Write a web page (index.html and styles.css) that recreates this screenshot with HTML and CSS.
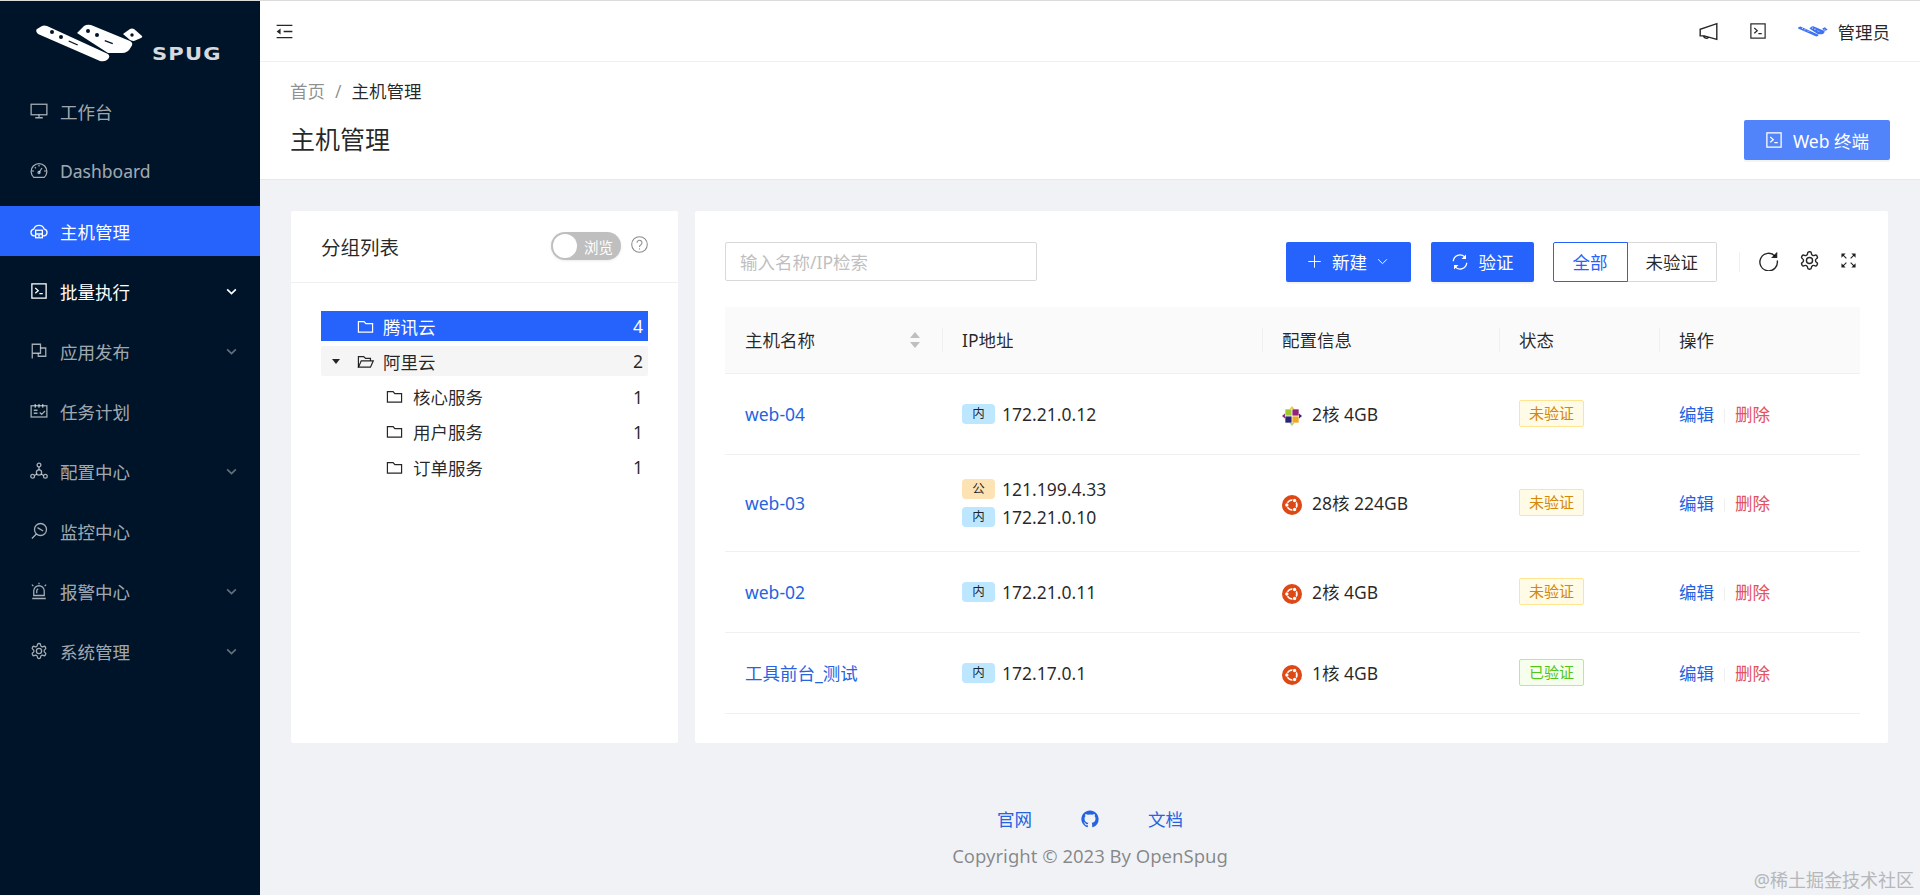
FILE: index.html
```html
<!DOCTYPE html>
<html lang="zh-CN">
<head>
    <meta charset="UTF-8">
    <meta name="viewport" content="width=device-width, initial-scale=1.0">
    <title>主机管理</title>
    <link rel="stylesheet" href="styles.css">
</head>
<body>
    <!-- Icon sprite -->
    <svg class="sprite" xmlns="http://www.w3.org/2000/svg">
        <symbol id="i-logo" viewBox="36 24 108 39">
            <path class="logo-body" d="M42 26 Q44 25 47 26 L108 54 Q111 57 107 60 Q104 62 100 61 L38 34 Q35 31 37 29z"/>
            <path class="logo-body" d="M77 33 L84 26 Q87 24 91 25 L130 41 Q134 43 131 47 Q128 53 122 53 L108 53z"/>
            <path class="logo-body" d="M123 34 L130 29 Q132 28 134 29 L142 36 Q143 37 141 38 L134 41 Q132 41 130 40z"/>
            <g class="logo-mark">
                <circle cx="52" cy="32" r="2"/><circle cx="61" cy="37" r="2"/>
                <path d="M69 40.5 L78 44.5 L77.4 45.6 L68.4 41.6z"/>
                <circle cx="88" cy="31" r="2"/><circle cx="97" cy="35" r="2"/>
                <path d="M105 40 L113 43 L112.5 44.2 L104.5 41.2z"/>
                <circle cx="132" cy="35" r="1.7"/>
            </g>
        </symbol>
        <symbol id="i-desktop" viewBox="0 0 24 24"><rect x="1.5" y="3" width="21" height="14"/><path d="M12 17v4M7 21h10"/></symbol>
        <symbol id="i-dashboard" viewBox="0 0 24 24"><path d="M5 20.5a10.5 10.5 0 1 1 14 0z"/><path d="M12 14l4-6M12 4v2M5 12H3M21 12h-2M6.5 7l1.3 1.3"/><circle cx="12" cy="14" r="1.4"/></symbol>
        <symbol id="i-cloud" viewBox="0 0 24 24"><path d="M7 18.5H5.5a4.5 4.5 0 0 1-.6-8.9 7.5 7.5 0 0 1 14.2 0 4.5 4.5 0 0 1-.6 8.9H17"/><rect x="7.5" y="11" width="9" height="10"/><path d="M7.5 16h9M10.5 18.5h3"/></symbol>
        <symbol id="i-code" viewBox="0 0 24 24"><rect x="2.5" y="2.5" width="19" height="19"/><path d="M7 8l4 3.5L7 15M12.5 15.5h4.5"/></symbol>
        <symbol id="i-deploy" viewBox="0 0 24 24"><path d="M3 22V3h11v12H3"/><path d="M14 8h7v11H11v-4"/></symbol>
        <symbol id="i-schedule" viewBox="0 0 24 24"><rect x="1.5" y="5" width="21" height="15"/><path d="M7 2.5v5M12 2.5v5M17 2.5v5M5 11h5M5 15h5M13 14l2.5 2.5L20 12"/></symbol>
        <symbol id="i-unit" viewBox="0 0 24 24"><circle cx="12" cy="4" r="2.5"/><circle cx="3.5" cy="19" r="2.5"/><circle cx="20.5" cy="19" r="2.5"/><circle cx="12" cy="14" r="3.5"/><path d="M12 6.5v4M6 18l3-2M18 18l-3-2"/></symbol>
        <symbol id="i-radar" viewBox="0 0 24 24"><circle cx="14" cy="10" r="8"/><path d="M8.5 16L2.5 22M10 7.5l7.5 4.5"/></symbol>
        <symbol id="i-alert" viewBox="0 0 24 24"><path d="M5 18v-6a7 7 0 0 1 14 0v6z"/><path d="M3 22h18M12 1v2M2.5 3.5l2 2M21.5 3.5l-2 2M9 15v-3a3 3 0 0 1 2-2.800"/></symbol>
        <symbol id="i-gear" viewBox="0 0 24 24"><path d="M12.220 2h-.44a2 2 0 0 0-2 2v.18a2 2 0 0 1-1 1.730l-.43.25a2 2 0 0 1-2 0l-.15-.08a2 2 0 0 0-2.730.73l-.22.38a2 2 0 0 0 .73 2.730l.15.1a2 2 0 0 1 1 1.720v.51a2 2 0 0 1-1 1.740l-.15.09a2 2 0 0 0-.73 2.730l.22.38a2 2 0 0 0 2.730.73l.15-.08a2 2 0 0 1 2 0l.43.25a2 2 0 0 1 1 1.730V20a2 2 0 0 0 2 2h.44a2 2 0 0 0 2-2v-.18a2 2 0 0 1 1-1.730l.43-.25a2 2 0 0 1 2 0l.15.08a2 2 0 0 0 2.730-.73l.22-.39a2 2 0 0 0-.73-2.730l-.15-.08a2 2 0 0 1-1-1.740v-.5a2 2 0 0 1 1-1.740l.15-.09a2 2 0 0 0 .73-2.730l-.22-.38a2 2 0 0 0-2.730-.73l-.15.08a2 2 0 0 1-2 0l-.43-.25a2 2 0 0 1-1-1.730V4a2 2 0 0 0-2-2z"/><circle cx="12" cy="12" r="3.500"/></symbol>
        <symbol id="i-chevron" viewBox="0 0 24 24"><path d="M4 8l8 8 8-8"/></symbol>
        <symbol id="i-menu" viewBox="0 0 24 24"><path d="M3 5h18M11 12h10M3 19h18"/><path class="solid" d="M7.500 8.500v7L3 12z"/></symbol>
        <symbol id="i-sound" viewBox="0 0 24 24"><path d="M21.500 3v18L7 17H2.500V9.500z"/><path d="M6.500 17a3 3 0 0 0 5.500 1.300"/></symbol>
        <symbol id="i-folder" viewBox="0 0 24 24"><path d="M2 5h8l2.500 3H22v12H2z"/></symbol>
        <symbol id="i-folder-open" viewBox="0 0 24 24"><path d="M2 20V5h7.500l2.500 2.500h7V11"/><path d="M2 20l4-9h17l-4 9z"/></symbol>
        <symbol id="i-help" viewBox="0 0 24 24"><circle cx="12" cy="12" r="11"/><path d="M8.500 9.500a3.500 3.500 0 1 1 5.500 2.900c-1.300.8-2 1.500-2 3"/><path d="M12 17.500v1.500"/></symbol>
        <symbol id="i-plus" viewBox="0 0 24 24"><path d="M12 2v20M2 12h20"/></symbol>
        <symbol id="i-sync" viewBox="0 0 24 24"><path d="M3 11a9 9 0 0 1 15.500-5.500M21 13a9 9 0 0 1-15.500 5.500"/><path class="solid" d="M20 2v6h-6zM4 22v-6h6z"/></symbol>
        <symbol id="i-reload" viewBox="0 0 24 24"><path d="M19.500 7A10 10 0 1 0 22 12"/><path class="solid" d="M22 2v7h-7z"/></symbol>
        <symbol id="i-full" viewBox="0 0 24 24"><path d="M4 4l5 5M20 4l-5 5M4 20l5-5M20 20l-5-5"/><path class="solid" d="M2 2h6L2 8zM22 2v6l-6-6zM2 22v-6l6 6zM22 22h-6l6-6z"/></symbol>
        <symbol id="i-ubuntu" viewBox="0 0 24 24">
            <circle class="ub-bg" cx="12" cy="12" r="12"/>
            <circle class="ub-ring" cx="12" cy="12" r="5.800"/>
            <circle class="ub-bg" cx="6.500" cy="12" r="2.800"/><circle class="ub-bg" cx="14.800" cy="7.200" r="2.800"/><circle class="ub-bg" cx="14.800" cy="16.800" r="2.800"/>
            <circle class="ub-dot" cx="5.800" cy="12" r="2"/><circle class="ub-dot" cx="15.100" cy="6.600" r="2"/><circle class="ub-dot" cx="15.100" cy="17.400" r="2"/>
        </symbol>
        <symbol id="i-centos" viewBox="0 0 24 24">
            <rect fill="#9ccd2a" x="4" y="4" width="7.500" height="7.500"/>
            <rect fill="#932279" x="12.500" y="4" width="7.500" height="7.500"/>
            <rect fill="#262577" x="4" y="12.500" width="7.500" height="7.500"/>
            <rect fill="#efa724" x="12.500" y="12.500" width="7.500" height="7.500"/>
            <path fill="#efc65a" d="M12 0l3 3.500H9z"/>
            <path fill="#932279" d="M0 12l3.500-3v6z"/>
            <path fill="#262577" d="M24 12l-3.500-3v6z"/>
            <path fill="#b5d56a" d="M12 24l3-3.500H9z"/>
        </symbol>
        <symbol id="i-github" viewBox="0 0 24 24"><path class="solid" d="M12 .5C5.650.5.5 5.650.5 12c0 5.080 3.290 9.390 7.860 10.910.58.11.79-.25.79-.56v-2.140c-3.200.7-3.870-1.360-3.870-1.360-.52-1.330-1.280-1.690-1.280-1.690-1.040-.71.08-.7.08-.7 1.160.08 1.770 1.190 1.770 1.190 1.030 1.760 2.690 1.250 3.350.96.1-.74.4-1.250.73-1.540-2.550-.29-5.240-1.280-5.240-5.680 0-1.250.45-2.280 1.180-3.080-.12-.29-.51-1.460.11-3.040 0 0 .97-.31 3.170 1.180a11 11 0 0 1 5.770 0c2.200-1.490 3.170-1.180 3.170-1.180.63 1.580.23 2.750.11 3.040.74.8 1.180 1.830 1.180 3.080 0 4.410-2.690 5.380-5.250 5.670.41.36.78 1.060.78 2.140v3.170c0 .31.21.67.8.56A11.500 11.500 0 0 0 23.500 12C23.500 5.650 18.350.5 12 .5z"/></symbol>
    </svg>

    <div class="layout">
        <!-- Sidebar -->
        <aside class="sidebar">
            <div class="logo">
                <svg class="logo-img"><use href="#i-logo"/></svg>
                <span class="logo-text">SPUG</span>
            </div>
            <nav class="menu">
                <a class="menu-item"><svg class="icon"><use href="#i-desktop"/></svg><span>工作台</span></a>
                <a class="menu-item"><svg class="icon"><use href="#i-dashboard"/></svg><span>Dashboard</span></a>
                <a class="menu-item active"><svg class="icon"><use href="#i-cloud"/></svg><span>主机管理</span></a>
                <a class="menu-item bright"><svg class="icon"><use href="#i-code"/></svg><span>批量执行</span><svg class="chevron"><use href="#i-chevron"/></svg></a>
                <a class="menu-item"><svg class="icon"><use href="#i-deploy"/></svg><span>应用发布</span><svg class="chevron"><use href="#i-chevron"/></svg></a>
                <a class="menu-item"><svg class="icon"><use href="#i-schedule"/></svg><span>任务计划</span></a>
                <a class="menu-item"><svg class="icon"><use href="#i-unit"/></svg><span>配置中心</span><svg class="chevron"><use href="#i-chevron"/></svg></a>
                <a class="menu-item"><svg class="icon"><use href="#i-radar"/></svg><span>监控中心</span></a>
                <a class="menu-item"><svg class="icon"><use href="#i-alert"/></svg><span>报警中心</span><svg class="chevron"><use href="#i-chevron"/></svg></a>
                <a class="menu-item"><svg class="icon"><use href="#i-gear"/></svg><span>系统管理</span><svg class="chevron"><use href="#i-chevron"/></svg></a>
            </nav>
        </aside>

        <div class="main">
            <!-- Top bar -->
            <header class="topbar">
                <svg class="icon topbar-toggle"><use href="#i-menu"/></svg>
                <div class="topbar-right">
                    <svg class="icon sound"><use href="#i-sound"/></svg>
                    <svg class="icon"><use href="#i-code"/></svg>
                    <div class="user">
                        <svg class="user-logo"><use href="#i-logo"/></svg>
                        <span>管理员</span>
                    </div>
                </div>
            </header>

            <!-- Page header -->
            <section class="page-header">
                <div class="page-heading">
                    <div class="breadcrumb"><span class="muted">首页</span><span class="muted sep">/</span><span>主机管理</span></div>
                    <h1 class="page-title">主机管理</h1>
                </div>
                <button class="btn btn-light"><svg class="icon"><use href="#i-code"/></svg>Web 终端</button>
            </section>

            <!-- Cards -->
            <section class="content">
                <div class="card group-card">
                    <div class="group-head">
                        <span class="group-title">分组列表</span>
                        <div class="switch"><span class="switch-knob"></span><span>浏览</span></div>
                        <svg class="icon help"><use href="#i-help"/></svg>
                    </div>
                    <ul class="tree">
                        <li class="tree-row selected"><svg class="icon"><use href="#i-folder"/></svg><span class="tree-name">腾讯云</span><span class="tree-count">4</span></li>
                        <li class="tree-row hovered"><span class="caret"></span><svg class="icon"><use href="#i-folder-open"/></svg><span class="tree-name">阿里云</span><span class="tree-count">2</span></li>
                        <li class="tree-row child"><svg class="icon"><use href="#i-folder"/></svg><span class="tree-name">核心服务</span><span class="tree-count">1</span></li>
                        <li class="tree-row child"><svg class="icon"><use href="#i-folder"/></svg><span class="tree-name">用户服务</span><span class="tree-count">1</span></li>
                        <li class="tree-row child"><svg class="icon"><use href="#i-folder"/></svg><span class="tree-name">订单服务</span><span class="tree-count">1</span></li>
                    </ul>
                </div>

                <div class="card host-card">
                    <div class="toolbar">
                        <input class="search" type="text" placeholder="输入名称/IP检索">
                        <button class="btn btn-new"><svg class="icon small"><use href="#i-plus"/></svg>新建<svg class="icon tiny"><use href="#i-chevron"/></svg></button>
                        <button class="btn btn-verify"><svg class="icon"><use href="#i-sync"/></svg>验证</button>
                        <div class="radio">
                            <span class="radio-item on">全部</span>
                            <span class="radio-item">未验证</span>
                        </div>
                        <span class="tool-divider"></span>
                        <svg class="tool-icon"><use href="#i-reload"/></svg>
                        <svg class="tool-icon"><use href="#i-gear"/></svg>
                        <svg class="tool-icon full"><use href="#i-full"/></svg>
                    </div>

                    <table class="hosts">
                        <colgroup>
                            <col class="col-name"><col class="col-ip"><col class="col-conf"><col class="col-status"><col class="col-action">
                        </colgroup>
                        <thead>
                            <tr>
                                <th>主机名称<span class="sorter"></span></th>
                                <th>IP地址</th>
                                <th>配置信息</th>
                                <th>状态</th>
                                <th>操作</th>
                            </tr>
                        </thead>
                        <tbody>
                            <tr>
                                <td><a class="link">web-04</a></td>
                                <td><div class="ip"><span class="ip-tag inner">内</span>172.21.0.12</div></td>
                                <td><div class="conf"><svg class="os"><use href="#i-centos"/></svg>2核 4GB</div></td>
                                <td><span class="tag warn">未验证</span></td>
                                <td><a class="link">编辑</a><span class="action-sep"></span><a class="danger">删除</a></td>
                            </tr>
                            <tr>
                                <td><a class="link">web-03</a></td>
                                <td>
                                    <div class="ip"><span class="ip-tag outer">公</span>121.199.4.33</div>
                                    <div class="ip"><span class="ip-tag inner">内</span>172.21.0.10</div>
                                </td>
                                <td><div class="conf"><svg class="os"><use href="#i-ubuntu"/></svg>28核 224GB</div></td>
                                <td><span class="tag warn">未验证</span></td>
                                <td><a class="link">编辑</a><span class="action-sep"></span><a class="danger">删除</a></td>
                            </tr>
                            <tr>
                                <td><a class="link">web-02</a></td>
                                <td><div class="ip"><span class="ip-tag inner">内</span>172.21.0.11</div></td>
                                <td><div class="conf"><svg class="os"><use href="#i-ubuntu"/></svg>2核 4GB</div></td>
                                <td><span class="tag warn">未验证</span></td>
                                <td><a class="link">编辑</a><span class="action-sep"></span><a class="danger">删除</a></td>
                            </tr>
                            <tr>
                                <td><a class="link">工具前台_测试</a></td>
                                <td><div class="ip"><span class="ip-tag inner">内</span>172.17.0.1</div></td>
                                <td><div class="conf"><svg class="os"><use href="#i-ubuntu"/></svg>1核 4GB</div></td>
                                <td><span class="tag ok">已验证</span></td>
                                <td><a class="link">编辑</a><span class="action-sep"></span><a class="danger">删除</a></td>
                            </tr>
                        </tbody>
                    </table>
                </div>
            </section>

            <!-- Footer -->
            <footer class="footer">
                <div class="footer-links">
                    <a class="link">官网</a>
                    <svg class="github"><use href="#i-github"/></svg>
                    <a class="link">文档</a>
                </div>
                <div class="copyright">Copyright © 2023 By OpenSpug</div>
            </footer>
        </div>
    </div>

    <div class="watermark">@稀土掘金技术社区</div>
</body>
</html>
```

FILE: styles.css
```css
/* General Styling */
* {
    box-sizing: border-box;
}

html, body {
    height: 100%;
}

body {
    margin: 0;
    position: relative;
    overflow: hidden;
    border-top: 1px solid #dcdcdc;
    background: #f0f2f5;
    color: rgba(0, 0, 0, 0.85);
    font-family: "Noto Sans", "Noto Sans CJK SC", sans-serif;
    font-size: 17.5px;
    font-weight: 400;
}

.sprite {
    display: none;
}

.icon {
    width: 18px;
    height: 18px;
    flex: none;
    fill: none;
    stroke: currentColor;
    stroke-width: 1.7;
}

.solid {
    fill: currentColor;
    stroke: none;
}

.layout {
    display: flex;
    height: 100%;
}

/* Sidebar */
.sidebar {
    width: 260px;
    flex: none;
    background: #001429;
    color: rgba(255, 255, 255, 0.65);
}

.logo {
    display: flex;
    align-items: flex-end;
    height: 85px;
    padding: 0 0 23px 37px;
}

.logo-img {
    width: 108px;
    height: 39px;
    margin-left: -1px;
}

.logo-body {
    fill: var(--logo-fill, #fff);
}

.logo-mark {
    fill: var(--logo-mark, #001429);
}

.logo-text {
    display: inline-block;
    margin-left: 8px;
    font-family: "DejaVu Sans", sans-serif;
    font-size: 18px;
    font-weight: 700;
    line-height: 18px;
    letter-spacing: 1px;
    color: #d5dade;
    transform: scaleX(1.17);
    transform-origin: left center;
}

.menu-item {
    display: flex;
    align-items: center;
    height: 50px;
    margin-bottom: 10px;
    padding: 0 22px 0 30px;
}

.menu-item span {
    margin-left: 12px;
    flex: 1;
}

.menu-item.active {
    background: #2563fc;
    color: #fff;
}

.menu-item.bright {
    color: #fff;
}

.chevron {
    width: 13px;
    height: 13px;
    fill: none;
    stroke: currentColor;
    stroke-width: 3;
    opacity: 0.6;
}

.bright .chevron {
    opacity: 1;
}

/* Top bar */
.main {
    flex: 1;
    display: flex;
    flex-direction: column;
    min-width: 0;
}

.topbar {
    display: flex;
    align-items: center;
    justify-content: space-between;
    height: 61px;
    flex: none;
    padding: 0 30px 0 14px;
    background: #fff;
    border-bottom: 1px solid #f0f0f0;
}

.topbar .icon {
    stroke-width: 1.6;
}

.topbar .topbar-toggle {
    width: 21px;
    height: 21px;
}

.topbar .sound {
    width: 21px;
    height: 21px;
    margin-right: -1px;
}

.topbar-right {
    display: flex;
    align-items: center;
    gap: 31px;
}

.user {
    display: flex;
    align-items: center;
    gap: 10px;
}

.user-logo {
    width: 30px;
    height: 13px;
    --logo-fill: #3f73f0;
    --logo-mark: #fff;
}

/* Page header */
.page-header {
    display: flex;
    align-items: flex-end;
    justify-content: space-between;
    height: 118px;
    flex: none;
    padding: 0 30px 19px 30px;
    background: #fff;
    border-bottom: 1px solid #e8e8e8;
}

.page-heading {
    margin-bottom: 3px;
}

.breadcrumb {
    display: flex;
    line-height: 28px;
    margin-bottom: 16px;
}

.muted {
    color: rgba(0, 0, 0, 0.45);
}

.sep {
    margin: 0 10px;
}

.page-title {
    margin: 0;
    font-size: 25px;
    font-weight: 400;
    line-height: 36px;
}

/* Buttons */
.btn {
    display: inline-flex;
    align-items: center;
    justify-content: center;
    gap: 10px;
    height: 40px;
    padding: 0;
    border: 0;
    border-radius: 2px;
    background: #2563fc;
    color: #fff;
    font: inherit;
    box-shadow: 0 2px 0 rgba(0, 0, 0, 0.045);
}

.btn-light {
    width: 146px;
    background: #5183fb;
}

.btn-new {
    width: 125px;
    margin-left: auto;
}

.btn-verify {
    width: 103px;
    margin-left: 20px;
}

.icon.small {
    width: 15px;
    height: 15px;
    stroke-width: 1.5;
}

.icon.tiny {
    width: 13px;
    height: 13px;
    margin-left: -1px;
    stroke-width: 1.8;
}

/* Cards */
.content {
    display: flex;
    gap: 17px;
    padding: 31px 32px 0 31px;
}

.card {
    height: 532px;
    background: #fff;
    border-radius: 2px;
}

/* Group tree */
.group-card {
    width: 387px;
    flex: none;
}

.group-head {
    display: flex;
    align-items: center;
    height: 72px;
    padding: 0 30px;
    border-bottom: 1px solid #f0f0f0;
}

.group-title {
    flex: 1;
    font-size: 19.500px;
}

.switch {
    display: flex;
    align-items: center;
    gap: 7px;
    width: 70px;
    height: 28px;
    margin-top: -1px;
    padding: 0 2px;
    border-radius: 14px;
    background: #bfbfbf;
    color: #fff;
    font-size: 14.500px;
    box-shadow: 0 1px 3px rgba(0, 0, 0, 0.08);
}

.switch-knob {
    width: 24px;
    height: 24px;
    border-radius: 50%;
    background: #fff;
}

.help {
    width: 17px;
    height: 17px;
    margin: -4px 0 0 10px;
    color: #8c8c8c;
    stroke-width: 1.500;
}

.tree {
    list-style: none;
    margin: 28px 0 0 30px;
    padding: 0;
    width: 327px;
}

.tree-row {
    position: relative;
    display: flex;
    align-items: center;
    height: 30px;
    margin-bottom: 5.300px;
    padding: 0 5px 0 36px;
}

.tree-row .icon {
    width: 17px;
    height: 17px;
}

.tree-name {
    flex: 1;
    margin-left: 9px;
}

.tree-row.selected {
    background: #2563fc;
    color: #fff;
}

.tree-row.hovered {
    background: #f5f5f5;
    border-radius: 2px;
}

.tree-row.child {
    padding-left: 65px;
}

.tree-row.child .tree-name {
    margin-left: 10px;
}

.caret {
    position: absolute;
    left: 11px;
    top: 13px;
    border: 4.500px solid transparent;
    border-top: 5.500px solid rgba(0, 0, 0, 0.85);
    border-bottom: 0;
}

/* Host table */
.host-card {
    flex: 1;
    min-width: 0;
    padding: 30px 28px 0 30px;
}

.toolbar {
    display: flex;
    align-items: center;
    height: 41px;
    margin-bottom: 25px;
}

.search {
    width: 312px;
    height: 39px;
    padding: 0 14px;
    border: 1px solid #d9d9d9;
    border-radius: 2px;
    font: inherit;
    outline: none;
}

.search::placeholder {
    color: #bfbfbf;
}

.radio {
    display: flex;
    margin-left: 19px;
}

.radio-item {
    height: 40px;
    padding: 0 18px;
    line-height: 38px;
    border: 1px solid #d9d9d9;
    border-left: 0;
    border-radius: 0 2px 2px 0;
}

.radio-item.on {
    padding: 0 19px;
    border: 1px solid #2563fc;
    border-radius: 2px 0 0 2px;
    color: #2563fc;
}

.tool-divider {
    width: 1px;
    height: 20px;
    margin: 0 18px 0 22px;
    background: #f0f0f0;
}

.tool-icon {
    width: 21px;
    height: 21px;
    margin-right: 20px;
    margin-top: -3px;
    fill: none;
    stroke: rgba(0, 0, 0, 0.85);
    stroke-width: 1.600;
    color: rgba(0, 0, 0, 0.85);
}

.tool-icon.full {
    width: 17px;
    height: 17px;
    margin-right: 3px;
}

.hosts {
    width: 100%;
    table-layout: fixed;
    border-collapse: collapse;
}

.col-name { width: 217px; }
.col-ip { width: 320px; }
.col-conf { width: 237px; }
.col-status { width: 160px; }

.hosts th {
    position: relative;
    height: 66px;
    padding: 0 20px;
    background: #fafafa;
    border-bottom: 1px solid #f0f0f0;
    font-weight: 400;
    text-align: left;
}

.hosts th + th::before {
    content: "";
    position: absolute;
    left: 0;
    top: 21px;
    width: 1px;
    height: 24px;
    background: #f0f0f0;
}

.sorter {
    position: absolute;
    right: 22px;
    top: 25px;
    width: 10px;
    height: 16px;
}

.sorter::before,
.sorter::after {
    content: "";
    position: absolute;
    left: 0;
    border-left: 5px solid transparent;
    border-right: 5px solid transparent;
}

.sorter::before {
    top: 0;
    border-bottom: 6px solid #bfbfbf;
}

.sorter::after {
    bottom: 0;
    border-top: 6px solid #bfbfbf;
}

.hosts td {
    height: 81px;
    padding: 20px;
    border-bottom: 1px solid #f0f0f0;
}

.link {
    color: #2563e0;
}

.danger {
    color: #e25263;
}

.ip {
    display: flex;
    align-items: center;
    height: 28px;
    white-space: nowrap;
}

.ip-tag {
    width: 33px;
    height: 20px;
    margin-right: 7px;
    border-radius: 4px;
    font-size: 12.500px;
    line-height: 20px;
    text-align: center;
}

.ip-tag.inner {
    background: #bde6ff;
}

.ip-tag.outer {
    background: #fde3b4;
}

.conf {
    display: flex;
    align-items: center;
}

.os {
    width: 20px;
    height: 20px;
    margin: 5px 10px 0 0;
    flex: none;
}

.ub-bg { fill: #dd4814; }
.ub-ring { fill: none; stroke: #fff; stroke-width: 2.200; }
.ub-dot { fill: #fff; }

.tag {
    display: inline-block;
    width: 65px;
    height: 27px;
    border: 1px solid;
    border-radius: 2px;
    font-size: 15px;
    line-height: 25px;
    text-align: center;
}

.tag.warn {
    background: #fffbe6;
    border-color: #ffe58f;
    color: #d48806;
}

.tag.ok {
    background: #f6ffed;
    border-color: #b7eb8f;
    color: #52c41a;
}

.action-sep {
    display: inline-block;
    width: 1px;
    height: 14px;
    margin: 0 10px;
    vertical-align: -2px;
    background: #f0f0f0;
}

/* Footer */
.footer {
    display: flex;
    flex-direction: column;
    align-items: center;
    padding-top: 62px;
}

.footer-links {
    display: flex;
    align-items: center;
    gap: 49px;
    line-height: 28px;
    margin-bottom: 9px;
}

.github {
    width: 18px;
    height: 18px;
    color: #2563e0;
}

.copyright {
    color: rgba(0, 0, 0, 0.45);
    font-size: 18.500px;
    line-height: 28px;
}

.watermark {
    position: absolute;
    right: 6px;
    bottom: 3px;
    color: #b5b7ba;
    font-size: 18px;
}
```
